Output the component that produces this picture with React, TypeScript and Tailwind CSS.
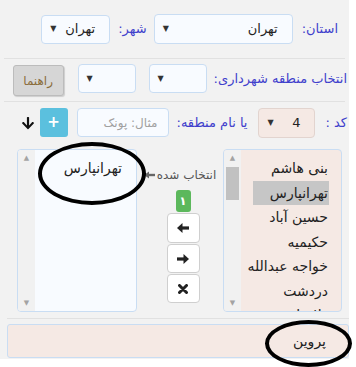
import { FaArrowDown } from 'react-icons/fa';

const font = { fontFamily: '"DejaVu Sans", "Liberation Sans", sans-serif' };

const areas = ['بنی هاشم', 'تهرانپارس', 'حسین آباد', 'حکیمیه', 'خواجه عبدالله', 'دردشت', 'دلاوران'];

function Select({ value, className, tone = 'blue' }: { value?: string; className: string; tone?: 'blue' | 'rose' }) {
  return (
    <div
      className={`flex shrink-0 items-center justify-between rounded-[4px] border pl-[8px] pr-[14px] text-[13px] text-[#222] ${
        tone === 'rose' ? 'border-[#e2d4cf] bg-[#f5e9e4]' : 'border-[#c9ddf3] bg-[#f8fbff]'
      } ${className}`}
    >
      <span>{value ?? ''}</span>
      <span className="text-[8px] text-[#333]">▼</span>
    </div>
  );
}

function Label({ children, className = '' }: { children: React.ReactNode; className?: string }) {
  return <span className={`shrink-0 whitespace-nowrap text-[13px] text-[#4040cc] ${className}`}>{children}</span>;
}

function FakeScrollbar({ thumb }: { thumb?: boolean }) {
  return (
    <div className="flex w-[17px] shrink-0 flex-col items-center bg-[#f1f1f1] py-[3px]">
      <span className="text-[7px] leading-[10px] text-[#a3a3a3]">▲</span>
      {thumb ? <div className="mt-[4px] h-[33px] w-[13px] bg-[#c1c1c1]" /> : null}
      <div className="flex-1" />
      <span className="text-[7px] leading-[10px] text-[#a3a3a3]">▼</span>
    </div>
  );
}

function HeavyArrow({ dir }: { dir: 'left' | 'right' }) {
  return (
    <svg width="12" height="10" viewBox="0 0 12 10" className={dir === 'right' ? 'rotate-180' : ''}>
      <path d="M0 5L5.5 0V10Z" fill="#222" />
      <rect x="4.5" y="3.4" width="7.5" height="3.2" fill="#222" />
    </svg>
  );
}

export default function App() {
  return (
    <div className="min-h-screen bg-white" style={font}>
      <div dir="rtl" className="relative h-[359px] w-[349px] bg-[#f2f2f2] pt-[14px]">
        {/* province / city */}
        <div className="flex h-[30px] items-center pr-[11px]">
          <Label>استان:</Label>
          <Select value="تهران" className="mr-[9px] h-[30px] w-[139px]" />
          <Label className="mr-[7px]">شهر:</Label>
          <Select value="تهران" className="mr-[8px] h-[29px] w-[69px]" />
        </div>

        <div className="mx-[4px] mt-[14px] h-px bg-[#e1e1e1]" />

        {/* municipality zone */}
        <div className="mt-[5px] flex h-[32px] items-start pr-[2px]">
          <Label className="mt-[5px] text-[12.5px]">انتخاب منطقه شهرداری:</Label>
          <Select className="mr-[7px] h-[29px] w-[58px]" />
          <Select className="mr-[13px] h-[29px] w-[58px]" />
          <button className="mr-[14px] mt-px h-[31px] w-[51px] shrink-0 rounded-[3px] border border-[#bcbcbc] bg-[#d6d6d6] text-[12px] text-[#8a6d3b] shadow-[1px_1px_1px_rgba(0,0,0,0.15)]">
            راهنما
          </button>
        </div>

        <div className="mx-[4px] mt-[5px] h-px bg-[#e1e1e1]" />

        {/* code / name */}
        <div className="mt-[5px] flex h-[31px] items-center pr-[2px]">
          <Label>کد :</Label>
          <Select value="4" tone="rose" className="mr-[10px] h-[30px] w-[57px]" />
          <Label className="mr-[11px] text-[12.5px]">یا نام منطقه:</Label>
          <div className="mr-[8px] flex h-[29px] w-[92px] shrink-0 items-center rounded-[4px] border border-[#c9ddf3] bg-[#f8fbff] pr-[10px] text-[12px] text-[#a0a0a0]">
            مثال: پونک
          </div>
          <button className="mr-[9px] flex h-[29px] w-[28px] shrink-0 items-center justify-center rounded-[3px] bg-[#5bc0de] text-[15px] font-bold text-white">
            +
          </button>
          <FaArrowDown className="mr-[5px] shrink-0 text-[#111]" size={14} />
        </div>

        {/* lists */}
        <div className="mt-[11px] flex h-[163px] pr-[7px]">
          <div className="flex w-[119px] overflow-hidden rounded-[4px] border border-[#c9ddf3] bg-[#f5e9e4]">
            <div className="flex-1 overflow-hidden px-[12px] pt-[6px] text-[14px] text-[#222]">
              {areas.map((a, i) => (
                <div key={a} className={`h-[24.5px] whitespace-nowrap pr-px leading-[24.5px] ${i === 1 ? 'bg-[#c6c6c6]' : ''}`}>
                  {a}
                </div>
              ))}
            </div>
            <FakeScrollbar thumb />
          </div>

          <div className="flex w-[86px] flex-col items-center">
            <div className="mt-[17px] flex items-center gap-[2px] text-[12px] text-[#555]">
              <span>انتخاب شده</span>
              <svg width="11" height="8" viewBox="0 0 11 8">
                <path d="M11 4H4" stroke="#666" strokeWidth="2.4" />
                <path d="M0 4L5 0.5V7.5Z" fill="#666" />
              </svg>
            </div>
            <span className="ml-[6px] mt-[6px] flex h-[22px] w-[15px] items-center justify-center rounded-[3px] bg-[#5cb85c] text-[12px] font-bold text-white">
              ۱
            </span>
            <div className="ml-[6px] mt-px flex flex-col gap-px">
              <button className="flex h-[30px] w-[33px] items-center justify-center rounded-[4px] border border-[#cfcfcf] bg-white">
                <HeavyArrow dir="left" />
              </button>
              <button className="flex h-[29px] w-[33px] items-center justify-center rounded-[4px] border border-[#cfcfcf] bg-white">
                <HeavyArrow dir="right" />
              </button>
              <button className="flex h-[29px] w-[33px] items-center justify-center rounded-[4px] border border-[#cfcfcf] bg-white">
                <svg width="10" height="10" viewBox="0 0 10 10">
                  <path d="M1.5 1.5L8.5 8.5M8.5 1.5L1.5 8.5" stroke="#222" strokeWidth="3" strokeLinecap="round" />
                </svg>
              </button>
            </div>
          </div>

          <div className="flex w-[120px] overflow-hidden rounded-[4px] border border-[#c9ddf3] bg-[#f8fbff]">
            <div className="flex-1 px-[14px] pt-[6px] text-[14px] text-[#222]">
              <div className="h-[24.5px] whitespace-nowrap leading-[24.5px]">تهرانپارس</div>
            </div>
            <FakeScrollbar />
          </div>
        </div>

        <div className="ml-[7px] mt-[6px] h-px bg-[#e1e1e1]" />

        <div className="ml-[7px] mt-[5px] flex h-[34px] items-center rounded-[3px] border border-[#c9ddf3] bg-[#f5e9e4] pr-[22px] text-[14px] text-[#222]">
          پروین
        </div>

        {/* annotation ellipses */}
        <div className="absolute left-[38px] top-[142px] h-[63px] w-[108px] rounded-[50%] border-[4px] border-black" />
        <div className="absolute left-[265px] top-[320px] h-[47px] w-[87px] rounded-[50%] border-[4px] border-black" />
      </div>
    </div>
  );
}
